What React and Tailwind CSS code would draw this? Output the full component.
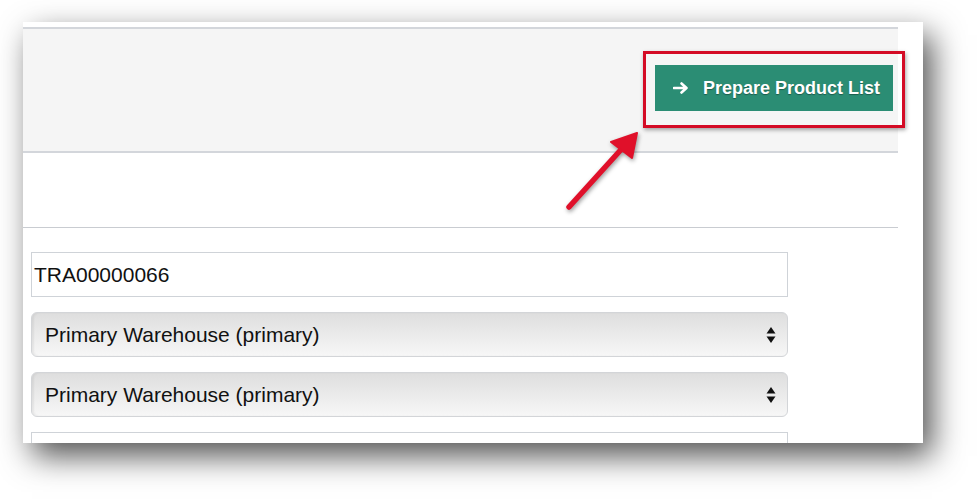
import React from 'react';

function Updown() {
  return (
    <svg width="10" height="18" viewBox="0 0 10 18" className="shrink-0">
      <path d="M5 1 L9.5 7.5 L0.5 7.5 Z" fill="#111" />
      <path d="M5 17 L9.5 10.5 L0.5 10.5 Z" fill="#111" />
    </svg>
  );
}

function SelectBox({ value }) {
  return (
    <div className="flex items-center justify-between h-[45px] rounded-[6px] border border-[#d3d5d8] bg-gradient-to-b from-[#dedede] to-[#f7f7f7] pl-[13px] pr-[11px] shadow-[inset_2px_0_2px_rgba(0,0,0,0.06)]">
      <span className="text-[21px] text-[#111]">{value}</span>
      <Updown />
    </div>
  );
}

export default function App() {
  return (
    <div className="w-[978px] h-[499px] bg-white relative overflow-hidden" style={{ fontFamily: '"Liberation Sans", Arial, sans-serif' }}>
      <div className="pt-[22px] pl-[23px]">
        <div className="w-[900px] h-[421px] bg-white overflow-hidden shadow-[9px_13px_30px_rgba(0,0,0,0.68)]">
          <div className="w-[875px] pt-[5px]">
            <div className="h-[126px] border-y-2 border-[#d3d6db] bg-[#f5f5f5] flex items-center justify-end pr-[5px] pb-[4px]">
              <button className="h-[46px] w-[238px] bg-[#2b8d74] text-white font-bold text-[18px] flex items-center pl-[18px] gap-[14px] [text-shadow:0_1px_1px_rgba(0,0,0,0.35)]">
                <svg width="16" height="12" viewBox="0 0 16 12" className="shrink-0">
                  <path d="M1 6 H13 M8.5 1.5 L13.5 6 L8.5 10.5" stroke="white" strokeWidth="2.6" fill="none" strokeLinecap="round" strokeLinejoin="round" />
                </svg>
                <span>Prepare Product List</span>
              </button>
            </div>
            <div className="h-[75px] border-b border-[#c9ccd1]"></div>
          </div>
          <div className="pl-[8px] pt-[24px] w-[765px] flex flex-col gap-[15px]">
            <div className="h-[45px] border border-[#cfd3d8] bg-white flex items-center pl-[2px]">
              <span className="text-[21px] text-[#111]">TRA00000066</span>
            </div>
            <SelectBox value="Primary Warehouse (primary)" />
            <SelectBox value="Primary Warehouse (primary)" />
            <div className="h-[45px] border border-[#cfd3d8] bg-white"></div>
          </div>
        </div>
      </div>

      {/* red highlight */}
      <div className="absolute left-[643px] top-[51px] w-[262px] h-[77px] border-[3px] border-[#d40b25] shadow-[1px_2px_4px_rgba(0,0,0,0.35)]"></div>
      <svg className="absolute left-0 top-0" width="978" height="499" style={{ filter: 'drop-shadow(1px 2px 2px rgba(0,0,0,0.4))' }}>
        <line x1="569" y1="207" x2="627" y2="143" stroke="#e0102a" strokeWidth="5.5" strokeLinecap="round" />
        <path d="M637 133 L611 142 L632 158 Z" fill="#e0102a" stroke="#e0102a" strokeWidth="2" strokeLinejoin="round" />
      </svg>
    </div>
  );
}
